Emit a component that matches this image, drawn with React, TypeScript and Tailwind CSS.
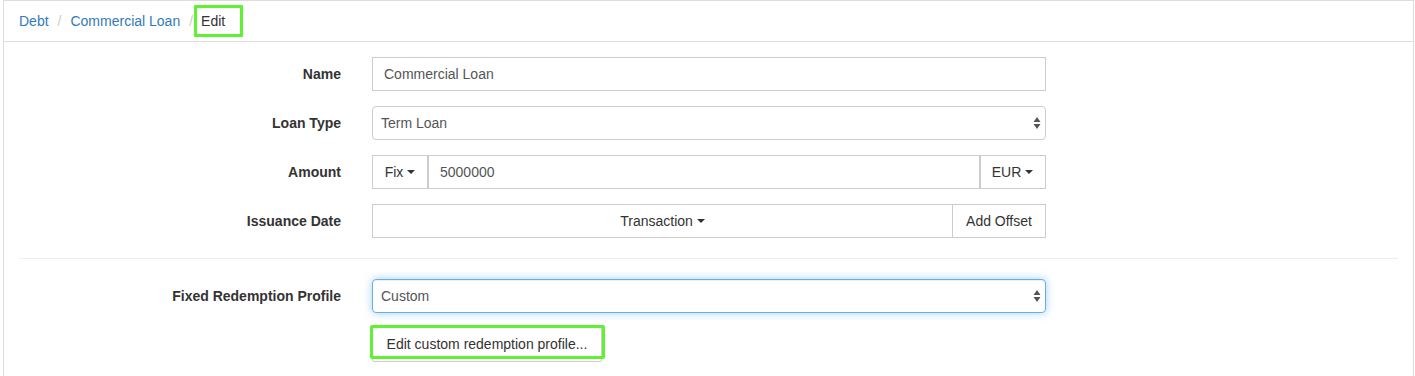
import React from "react";

const Caret = () => (
  <span className="inline-block ml-[4px] align-middle w-0 h-0 border-l-[4px] border-r-[4px] border-t-[4px] border-l-transparent border-r-transparent border-t-[#333]" />
);

const SelectArrows = () => (
  <svg width="8" height="14" viewBox="0 0 8 14" className="absolute right-[4px] top-1/2 -translate-y-1/2">
    <path d="M4 1 L7.5 6 L0.5 6 Z" fill="#555" />
    <path d="M4 13 L7.5 8 L0.5 8 Z" fill="#555" />
  </svg>
);

function Row({ label, children }: { label: string; children: React.ReactNode }) {
  return (
    <div className="flex items-center h-[34px] mb-[15px]">
      <div className="w-[322px] text-right font-bold text-[14px] text-[#333]">{label}</div>
      <div className="ml-[31px] w-[674px]">{children}</div>
    </div>
  );
}

export default function App() {
  return (
    <div
      className="w-[1415px] h-[376px] bg-white text-[#333] text-[14px] overflow-hidden"
      style={{ fontFamily: '"Liberation Sans", Arial, sans-serif' }}
    >
      <div className="ml-[3px] w-[1411px] h-[400px] border-l border-r border-t border-[#dddddd]">
        <div className="h-[41px] border-b border-[#dddddd] flex items-center pl-[15px]">
          <a className="text-[#337ab7]">Debt</a>
          <span className="text-[#cccccc] ml-[9px] mr-[9px]">/</span>
          <a className="text-[#337ab7]">Commercial Loan</a>
          <span className="text-[#cccccc] ml-[9px]">/</span>
          <span className="ml-[1px] inline-flex items-center h-[32px] border-[3px] border-[#5ef230] pl-[4px] pr-[15px] text-[#333] rounded-[1px]">
            Edit
          </span>
        </div>

        <div className="pt-[15px] px-[15px]">
          <Row label="Name">
            <div className="h-[34px] border border-[#cccccc] flex items-center px-[11px] text-[#555]">Commercial Loan</div>
          </Row>
          <Row label="Loan Type">
            <div className="relative h-[34px] border border-[#cccccc] rounded-[4px] flex items-center pl-[8px] text-[#555]">
              Term Loan
              <SelectArrows />
            </div>
          </Row>
          <Row label="Amount">
            <div className="flex h-[34px]">
              <div className="w-[56px] border border-[#cccccc] flex items-center justify-center text-[#333]">
                Fix
                <Caret />
              </div>
              <div className="flex-1 border border-[#cccccc] border-l-0 flex items-center pl-[12px] text-[#555]" style={{ boxShadow: "inset 1px 0 0 #cccccc" }}>
                5000000
              </div>
              <div className="w-[66px] border border-[#cccccc] border-l-0 flex items-center justify-center" style={{ boxShadow: "inset 1px 0 0 #cccccc" }}>
                EUR
                <Caret />
              </div>
            </div>
          </Row>
          <Row label="Issuance Date">
            <div className="flex h-[34px]">
              <div className="flex-1 border border-[#cccccc] flex items-center justify-center text-[#333]">
                Transaction
                <Caret />
              </div>
              <div className="w-[93px] border border-[#cccccc] border-l-0 flex items-center justify-center">Add Offset</div>
            </div>
          </Row>

          <div className="h-px bg-[#eeeeee] mt-[20px] mb-[20px]" />

          <Row label="Fixed Redemption Profile">
            <div
              className="relative h-[34px] border border-[#66afe9] rounded-[4px] flex items-center pl-[8px] text-[#555]"
              style={{ boxShadow: "inset 0 1px 1px rgba(0,0,0,.075), 0 0 8px rgba(102,175,233,.6)" }}
            >
              Custom
              <SelectArrows />
            </div>
          </Row>
          <div className="flex -mt-[1px]">
            <div className="ml-[353px] relative">
              <div className="w-[230px] h-[35px] border border-[#cccccc] rounded-[2px] flex items-center justify-center text-[#333]">
                Edit custom redemption profile...
              </div>
              <div className="absolute left-[-2px] top-[-2px] w-[235px] h-[34px] border-[3px] border-[#5ef230] rounded-[2px]" />
            </div>
          </div>
        </div>
      </div>
    </div>
  );
}
